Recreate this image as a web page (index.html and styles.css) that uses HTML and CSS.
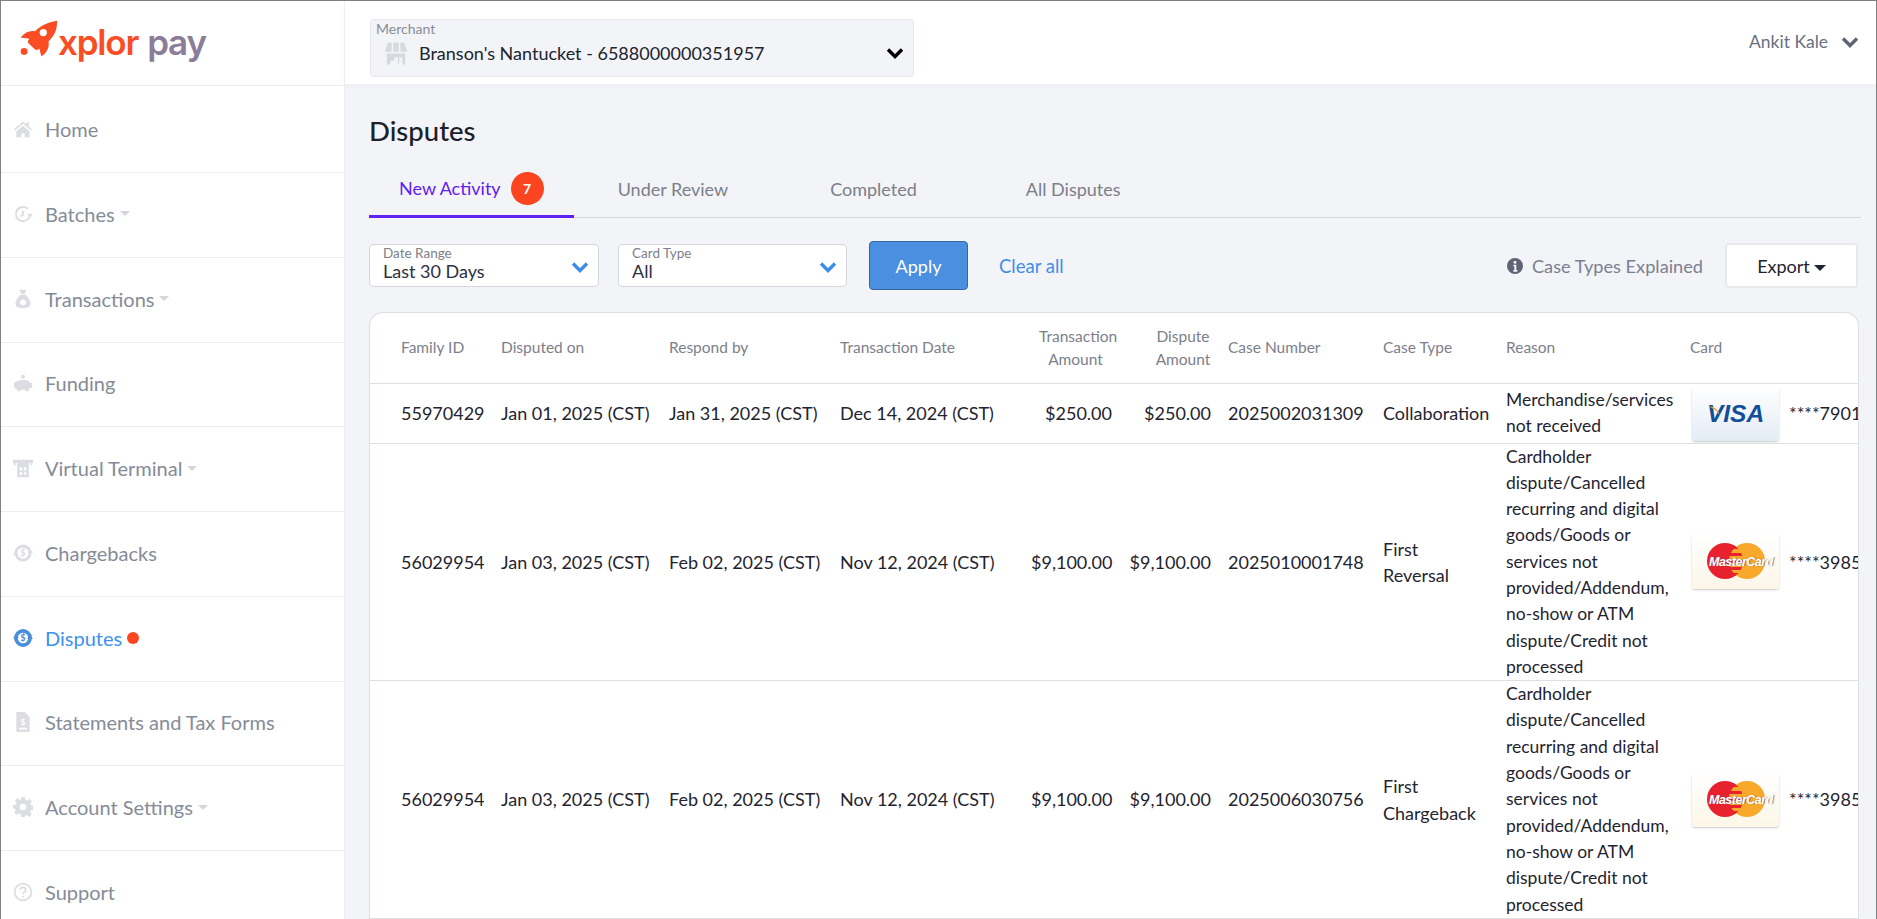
FILE: index.html
```html
<!DOCTYPE html>
<html lang="en">
<head>
<meta charset="utf-8">
<title>Disputes - Xplor Pay</title>
<link rel="stylesheet" href="styles.css">
</head>
<body>
<div class="app">
  <aside class="sidebar">
    <div class="logo">
      <svg class="rocket" viewBox="60 58 114 112"><path fill="#fb4d23" d="M172 60C150 63 125 72 105 92C90 89 74 95 61 111L88 115C82 122 82 125 85 128L105 147C110 150 115 148 118 144L124 168C142 156 149 140 146 122C165 105 172 85 172 60Z"/><circle cx="130" cy="96" r="11" fill="#fff"/><circle cx="72" cy="153" r="10.5" fill="#fb4d23"/></svg>
      <span class="logo-xplor">xplor</span><span class="logo-pay">pay</span>
    </div>
    <nav>
      <a class="nav-item nav-first"><svg class="nav-icon" viewBox="0 0 24 24"><path d="M12 3 1 12.5l1.3 1.4L12 5.6l9.7 8.3 1.3-1.4-4-3.4V4h-3v2.6zM4 15v7h6v-5h4v5h6v-7l-8-7z"/></svg>Home</a>
      <a class="nav-item"><svg class="nav-icon" viewBox="0 0 24 24"><path fill="none" stroke="currentColor" stroke-width="2.200" d="M20.500 12a8.500 8.500 0 1 1-2.600-6.100M12 8v5l-3 2"/><path d="m24 12-3.500 3.500L17 12z"/></svg>Batches<i class="caret"></i></a>
      <a class="nav-item"><svg class="nav-icon" viewBox="0 0 24 24"><path d="M8 1h8l-2 5h-4zM9 7h6c3 3 6 7 6 10.500C21 21 18 23 12 23S3 21 3 17.500C3 14 6 10 9 7z"/><circle cx="12" cy="16" r="3.500" fill="#fff"/></svg>Transactions<i class="caret"></i></a>
      <a class="nav-item"><svg class="nav-icon" viewBox="0 0 24 24"><circle cx="12" cy="4.500" r="2.500"/><path d="M5 10c2-2 12-2 14 0l2 2h2v6h-3l-1 2v2h-4v-2H9v2H5v-2c-2-1-4-3-4-6 0-2 2-4 4-4z"/></svg>Funding</a>
      <a class="nav-item"><svg class="nav-icon" viewBox="0 0 24 24"><path fill-rule="evenodd" d="M0 2h24v2.500L22.500 9H21V6H3v3H1.500L0 4.500zM5 6h14v17H5zM8 11v4h3v-4zm5 0v4h3v-4zm-5 6v3h3v-3zm5 0v3h3v-3z"/></svg>Virtual Terminal<i class="caret"></i></a>
      <a class="nav-item"><svg class="nav-icon" viewBox="0 0 24 24"><circle cx="12" cy="12" r="8.500" fill="none" stroke="currentColor" stroke-width="3.500"/><path d="M0 12h6l-3 4zM24 12h-6l3-4z"/><text class="dollar dollar-soft" x="12" y="16" text-anchor="middle">$</text></svg>Chargebacks</a>
      <a class="nav-item nav-active"><svg class="nav-icon" viewBox="0 0 24 24"><circle cx="12" cy="12" r="8.500" fill="none" stroke="currentColor" stroke-width="4.500"/><path d="M0 11h7l-3.500 5zM24 13h-7l3.500-5z"/><text class="dollar" x="12" y="16" text-anchor="middle">$</text></svg>Disputes<i class="dot"></i></a>
      <a class="nav-item"><svg class="nav-icon" viewBox="0 0 24 24"><path d="M4 0h10l6 6v18H4zM7 19v2h10v-2z" fill-rule="evenodd"/><text class="dollar dollar-light" x="12" y="16" text-anchor="middle">$</text></svg>Statements and Tax Forms</a>
      <a class="nav-item"><svg class="nav-icon" viewBox="0 0 24 24"><path fill-rule="evenodd" d="M10 0h4l.7 3.300 2.200.9L19.800 2.400l2.800 2.800-1.800 2.900.9 2.200 3.300.7v4l-3.300.7-.9 2.200 1.800 2.900-2.800 2.800-2.900-1.800-2.200.9L14 24h-4l-.7-3.300-2.200-.9-2.900 1.800-2.800-2.800 1.800-2.900-.9-2.200L0 14v-4l3.300-.7.9-2.200-1.800-2.900 2.800-2.800 2.900 1.800 2.200-.9zM12 8a4 4 0 1 0 0 8 4 4 0 0 0 0-8z"/></svg>Account Settings<i class="caret"></i></a>
      <a class="nav-item"><svg class="nav-icon" viewBox="0 0 24 24"><circle cx="12" cy="12" r="10" fill="none" stroke="currentColor" stroke-width="2"/><path fill="none" stroke="currentColor" stroke-width="2" d="M8.800 9.500c0-4.200 6.400-4.200 6.400 0 0 2.500-3.200 2.300-3.200 5"/><circle cx="12" cy="17.500" r="1.300"/></svg>Support</a>
    </nav>
  </aside>
  <div class="content">
    <header class="topbar">
      <div class="merchant">
        <span class="merchant-label">Merchant</span>
        <div class="merchant-row">
          <svg class="store" viewBox="0 0 24 24"><path fill-rule="evenodd" d="M3 0h4.500L7 10H0zM9 0h6v10H9zM16.500 0H21l3 10h-7zM2 12h20v12h-8v-8H10v4H6v4H2zM15.500 16H19v8h-3.500z"/></svg>
          <span class="merchant-name">Branson's Nantucket - 6588000000351957</span>
          <svg class="chev chev-black" viewBox="0 0 18 12"><path d="M2 2.500 9 9.500l7-7"/></svg>
        </div>
      </div>
      <div class="user">
        <span>Ankit Kale</span>
        <svg class="chev chev-gray" viewBox="0 0 18 12"><path d="M2 2.500 9 9.500l7-7"/></svg>
      </div>
    </header>
    <main class="main">
      <h1 class="title">Disputes</h1>
      <div class="tabs">
        <a class="tab tab-active">New Activity<span class="badge">7</span></a>
        <a class="tab tab-review">Under Review</a>
        <a class="tab tab-completed">Completed</a>
        <a class="tab">All Disputes</a>
      </div>
      <div class="filters">
        <div class="select select-date">
          <span class="select-label">Date Range</span>
          <span class="select-value">Last 30 Days</span>
          <svg class="chev chev-blue" viewBox="0 0 18 12"><path d="M2 2.500 9 9.500l7-7"/></svg>
        </div>
        <div class="select select-card">
          <span class="select-label">Card Type</span>
          <span class="select-value">All</span>
          <svg class="chev chev-blue" viewBox="0 0 18 12"><path d="M2 2.500 9 9.500l7-7"/></svg>
        </div>
        <button class="apply">Apply</button>
        <a class="clear">Clear all</a>
        <div class="filters-right">
          <svg class="info" viewBox="0 0 24 24"><path fill-rule="evenodd" d="M12 0a12 12 0 1 0 0 24 12 12 0 0 0 0-24zM9.500 10h4.500v8h1.500v2.500h-6V18H11v-5.500H9.500zM12 4a2.300 2.300 0 1 1 0 4.600A2.300 2.300 0 0 1 12 4z"/></svg>
          <span class="case-types">Case Types Explained</span>
          <button class="export">Export<i class="caret caret-dark"></i></button>
        </div>
      </div>
      <div class="table-card">
        <table class="disputes">
          <thead>
            <tr>
              <th class="c-id">Family ID</th>
              <th class="c-date">Disputed on</th>
              <th class="c-resp">Respond by</th>
              <th class="c-txn">Transaction Date</th>
              <th class="c-amt1">Transaction<br>Amount</th>
              <th class="c-amt2">Dispute<br>Amount</th>
              <th class="c-case">Case Number</th>
              <th class="c-type">Case Type</th>
              <th class="c-reason">Reason</th>
              <th class="c-card">Card</th>
            </tr>
          </thead>
          <tbody>
            <tr class="row-short">
              <td class="c-id">55970429</td>
              <td class="c-date">Jan 01, 2025 (CST)</td>
              <td class="c-resp">Jan 31, 2025 (CST)</td>
              <td class="c-txn">Dec 14, 2024 (CST)</td>
              <td class="c-amt1">$250.00</td>
              <td class="c-amt2">$250.00</td>
              <td class="c-case">2025002031309</td>
              <td class="c-type">Collaboration</td>
              <td class="c-reason"><span class="reason-text">Merchandise/services<br>not received</span></td>
              <td class="c-card"><div class="card-cell">
                <div class="card card-visa"><svg class="visa-swoosh" viewBox="0 0 12 9"><path d="M0 0C5 .5 9 2 12 9 9 5 5 2 0 0Z"/></svg><span class="visa-mark">VISA</span></div><span>****7901</span>
              </div></td>
            </tr>
            <tr>
              <td class="c-id">56029954</td>
              <td class="c-date">Jan 03, 2025 (CST)</td>
              <td class="c-resp">Feb 02, 2025 (CST)</td>
              <td class="c-txn">Nov 12, 2024 (CST)</td>
              <td class="c-amt1">$9,100.00</td>
              <td class="c-amt2">$9,100.00</td>
              <td class="c-case">2025010001748</td>
              <td class="c-type">First<br>Reversal</td>
              <td class="c-reason"><span class="reason-text">Cardholder<br>dispute/Cancelled<br>recurring and digital<br>goods/Goods or<br>services not<br>provided/Addendum,<br>no-show or ATM<br>dispute/Credit not<br>processed</span></td>
              <td class="c-card"><div class="card-cell">
                <div class="card card-mc"><svg class="mc-logo" viewBox="0 0 58 36"><defs><clipPath id="mc-a"><circle cx="18" cy="18" r="18"/></clipPath></defs><circle cx="18" cy="18" r="18" fill="#e8212f"/><circle cx="40" cy="18" r="18" fill="#f8a92c"/><g clip-path="url(#mc-a)" fill="#e8212f"><rect x="22" y="2" width="14" height="4"/><rect x="22" y="10" width="14" height="3"/><rect x="22" y="17" width="14" height="3"/><rect x="22" y="24" width="14" height="3"/><rect x="22" y="30" width="14" height="3"/></g></svg><span class="mc-mark">MasterCard</span></div><span>****3985</span>
              </div></td>
            </tr>
            <tr>
              <td class="c-id">56029954</td>
              <td class="c-date">Jan 03, 2025 (CST)</td>
              <td class="c-resp">Feb 02, 2025 (CST)</td>
              <td class="c-txn">Nov 12, 2024 (CST)</td>
              <td class="c-amt1">$9,100.00</td>
              <td class="c-amt2">$9,100.00</td>
              <td class="c-case">2025006030756</td>
              <td class="c-type">First<br>Chargeback</td>
              <td class="c-reason"><span class="reason-text">Cardholder<br>dispute/Cancelled<br>recurring and digital<br>goods/Goods or<br>services not<br>provided/Addendum,<br>no-show or ATM<br>dispute/Credit not<br>processed</span></td>
              <td class="c-card"><div class="card-cell">
                <div class="card card-mc"><svg class="mc-logo" viewBox="0 0 58 36"><defs><clipPath id="mc-b"><circle cx="18" cy="18" r="18"/></clipPath></defs><circle cx="18" cy="18" r="18" fill="#e8212f"/><circle cx="40" cy="18" r="18" fill="#f8a92c"/><g clip-path="url(#mc-b)" fill="#e8212f"><rect x="22" y="2" width="14" height="4"/><rect x="22" y="10" width="14" height="3"/><rect x="22" y="17" width="14" height="3"/><rect x="22" y="24" width="14" height="3"/><rect x="22" y="30" width="14" height="3"/></g></svg><span class="mc-mark">MasterCard</span></div><span>****3985</span>
              </div></td>
            </tr>
          </tbody>
        </table>
      </div>
    </main>
  </div>
</div>
</body>
</html>
```
FILE: styles.css
```css
* { box-sizing: border-box; }
html, body { margin: 0; height: 919px; overflow: hidden; }
body { font-family: "Lato", "Noto Sans", sans-serif; background: #fff; color: #1f2430; }
.app { display: flex; height: 919px; border: 1px solid #808080; border-bottom: 0; overflow: hidden; }

.sidebar { width: 344px; flex: none; background: #fff; border-right: 1px solid #eff0f3; overflow: hidden; }
.logo { height: 85px; display: flex; align-items: center; padding: 0 0 2px 19px; border-bottom: 1px solid #ebedf0; font-family: "Inter", sans-serif; font-weight: 600; font-size: 35px; letter-spacing: -1.2px; }
.rocket { width: 38px; height: 37px; margin: -8px 0 0; flex: none; }
.logo-xplor { color: #fb4d23; margin-right: 9px; }
.logo-pay { color: #8b7c98; }
.nav-item { height: 84.750px; display: flex; align-items: center; padding: 0 0 2px 12px; border-bottom: 1px solid #ebedf0; color: #858b98; font-size: 20px; }
.nav-first { height: 87px; padding-bottom: 0; }
.nav-icon { width: 20px; height: 20px; margin-right: 12px; flex: none; fill: currentColor; color: #dcdde2; }
.nav-active { color: #3c91f2; }
.nav-active .nav-icon { color: #4a8ede; }
.dollar { font-size: 11px; font-weight: 700; fill: #4a8ede; }
.dollar-soft { fill: #dcdde2; }
.dollar-light { fill: #fff; font-size: 10px; }
.caret { display: inline-block; width: 0; height: 0; margin-left: 5px; border-left: 5px solid transparent; border-right: 5px solid transparent; border-top: 5px solid #d5d6dd; }
.dot { width: 12px; height: 12px; margin-left: 5px; border-radius: 50%; background: #fb4520; }

.content { flex: 1; min-width: 0; display: flex; flex-direction: column; background: #f3f4f8; }
.topbar { height: 83px; flex: none; display: flex; align-items: flex-start; justify-content: space-between; background: #fff; padding: 18px 17px 0 25px; box-shadow: 0 2px 6px rgba(40, 50, 80, .03); position: relative; }
.merchant { width: 544px; height: 58px; background: #f3f4f8; border: 1px solid #e6e7eb; border-radius: 4px; padding: 0 0 0 5px; }
.merchant-label { display: block; font-size: 14px; line-height: 16px; margin-top: 1px; color: #8a8d96; }
.merchant-row { display: flex; align-items: center; height: 32px; padding-left: 9px; }
.store { width: 22px; height: 23px; fill: #d8d9de; margin-right: 12px; flex: none; }
.merchant-name { font-size: 18px; color: #20242e; flex: 1; }
.chev { fill: none; stroke-width: 3.4; stroke-linecap: butt; flex: none; }
.chev path { stroke: currentColor; }
.chev-black { width: 18px; height: 12px; color: #000; margin-right: 9px; }
.chev-gray { width: 18px; height: 12px; color: #5f6376; }
.chev-blue { width: 18px; height: 12px; color: #3c8ce8; position: absolute; right: 9px; top: 16px; }
.user { display: flex; align-items: center; gap: 13px; font-size: 17.500px; color: #6a7082; margin-top: 12px; }

.main { flex: 1; min-height: 0; padding: 0 15px 0 24px; overflow: hidden; }
.title { margin: 29px 0 0; font-size: 27.500px; line-height: 36px; font-weight: 500; color: #1c2029; }
.tabs { display: flex; margin-top: 16px; height: 53px; border-bottom: 1px solid #d6d8dd; font-size: 18px; color: #7b7f8a; }
.tab { display: flex; align-items: center; height: 53px; padding: 0 34px 6px 30px; }
.tab-active { color: #6020f0; border-bottom: 3px solid #6020f0; padding: 0 30px 4px 30px; }
.tab-review { padding-left: 44px; padding-right: 102px; }
.tab-completed { padding-left: 0; padding-right: 79px; }
.badge { width: 33px; height: 33px; margin-left: 10px; border-radius: 50%; background: #fb4520; color: #fff; font-size: 14px; font-weight: 700; display: flex; align-items: center; justify-content: center; }

.filters { display: flex; align-items: center; height: 49px; margin-top: 23px; }
.select { position: relative; height: 43px; background: #fff; border: 1px solid #d5d8de; border-radius: 4px; padding: 0 0 0 13px; }
.select-date { width: 230px; margin-right: 19px; }
.select-card { width: 229px; margin-right: 22px; }
.select-label { display: block; font-size: 13.500px; line-height: 15px; margin-top: 1px; color: #7d808a; }
.select-value { display: block; font-size: 18px; line-height: 20px; color: #2c3040; margin-top: 0; }
.apply { width: 99px; height: 49px; background: #4a8fe0; border: 1px solid #35689f; border-radius: 4px; color: #fff; font: inherit; font-size: 18px; }
.clear { margin-left: 31px; color: #3f8fe6; font-size: 18.500px; }
.filters-right { margin-left: auto; display: flex; align-items: center; margin-right: 3px; }
.info { width: 16px; height: 16px; fill: #5f6376; margin-right: 9px; }
.case-types { color: #7a8092; font-size: 18.200px; margin-right: 22px; }
.export { width: 133px; height: 45px; background: #fff; border: 2px solid #e8e9ed; border-radius: 4px; font: inherit; font-size: 18px; color: #1f2430; }
.caret-dark { border-left-width: 6px; border-right-width: 6px; border-top: 6px solid #1f2430; margin-left: 4px; vertical-align: 2px; }

.table-card { width: 1490px; margin: 22px 0 0; background: #fff; border: 1px solid #dcdee3; border-bottom: 0; border-radius: 14px 14px 0 0; overflow: hidden; height: 620px; }
.disputes { width: 1588px; table-layout: fixed; border-collapse: collapse; font-size: 18px; line-height: 26.300px; color: #1f2430; }
.disputes th { height: 70px; padding: 0 0 0 12px; font-size: 15.500px; line-height: 23px; font-weight: 400; color: #7c808b; text-align: left; border-bottom: 1px solid #dfe0e4; }
.disputes td { padding: 0 0 0 12px; border-bottom: 1px solid #dfe0e4; white-space: nowrap; }
.row-short td { height: 60px; }
.disputes .c-id { width: 131px; padding-left: 31px; }
.disputes .c-date { width: 168px; padding-left: 0; }
.disputes .c-resp { width: 171px; padding-left: 0; }
.disputes .c-txn { width: 191px; padding-left: 0; }
.disputes .c-amt1 { width: 94px; padding-left: 0; padding-right: 13px; text-align: right; }
.disputes .c-amt2 { width: 91px; padding-left: 0; padding-right: 5px; text-align: right; }
.disputes th.c-amt1 { padding-left: 8px; text-align: center; }
.disputes th.c-amt2 { padding-left: 30px; text-align: center; }
.disputes .c-case { width: 154px; padding-left: 12px; }
.disputes .c-type { width: 124px; padding-left: 13px; }
.disputes .c-reason { width: 184px; padding-left: 12px; }
.reason-text { display: block; font-size: 17.500px; }
.disputes .c-card { width: 280px; padding-left: 12px; }
.card-cell { display: flex; align-items: center; gap: 10px; }
.card { position: relative; width: 87px; height: 54px; margin: 1px 0 0 2px; border-radius: 3px; box-shadow: 0 1px 2px rgba(0, 0, 0, .22); flex: none; overflow: hidden; }
.card-visa { background: linear-gradient(#fff, #e3ecf5); display: flex; align-items: center; justify-content: center; padding-top: 1px; }
.visa-mark { font: italic 700 24.500px/1 "Liberation Sans", sans-serif; color: #124f9b; }
.visa-swoosh { position: absolute; left: 16px; top: 19px; width: 12px; height: 9px; fill: #f4a51c; }
.card-mc { background: linear-gradient(#fff, #fdf6e8); }
.mc-logo { position: absolute; left: 15px; top: 8px; width: 58px; height: 36px; }
.mc-mark { position: absolute; left: 17px; top: 19px; font: italic 700 12.500px/16px "Liberation Sans", sans-serif; letter-spacing: -.5px; color: #fff; text-shadow: 1px 0 1px rgba(90, 90, 90, .8); }
```
